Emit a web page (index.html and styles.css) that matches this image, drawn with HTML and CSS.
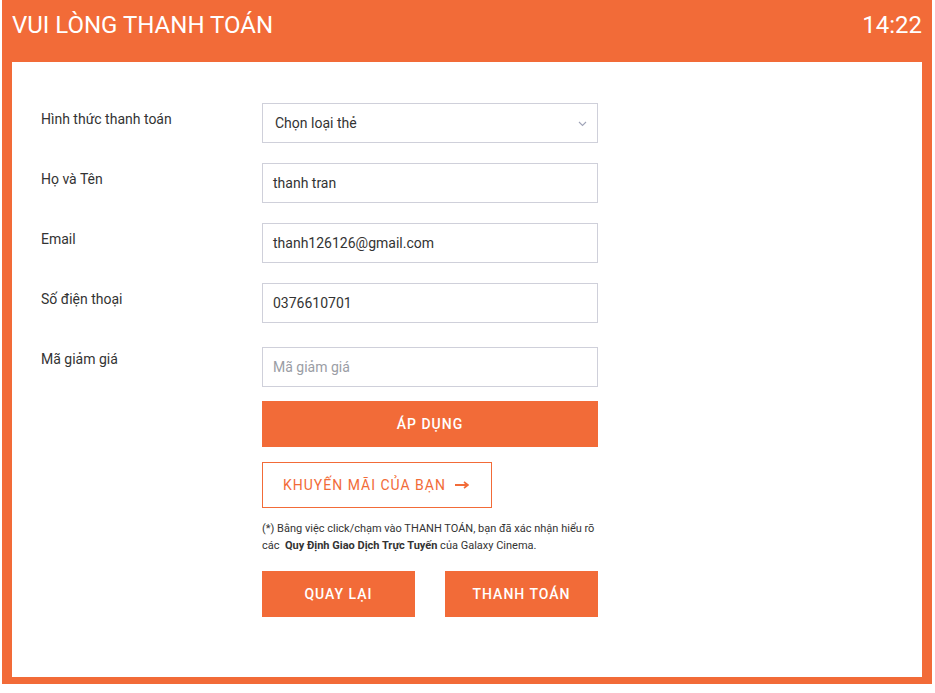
FILE: index.html
```html
<!DOCTYPE html>
<html lang="vi">
<head>
<meta charset="utf-8">
<title>Vui lòng thanh toán</title>
<link rel="stylesheet" href="styles.css">
</head>
<body>
<div class="frame">
  <header class="topbar">
    <h1 class="title">VUI LÒNG THANH TOÁN</h1>
    <div class="timer">14:22</div>
  </header>
  <main class="card">
    <div class="row">
      <label class="label">Hình thức thanh toán</label>
      <div class="field select">
        <span>Chọn loại thẻ</span>
        <svg class="chev" width="9" height="6" viewBox="0 0 9 6"><path d="M1 1l3.5 3.5L8 1" fill="none" stroke="#a0a4b8" stroke-width="1.1"/></svg>
      </div>
    </div>
    <div class="row">
      <label class="label">Họ và Tên</label>
      <div class="field">thanh tran</div>
    </div>
    <div class="row">
      <label class="label">Email</label>
      <div class="field">thanh126126@gmail.com</div>
    </div>
    <div class="row">
      <label class="label">Số điện thoại</label>
      <div class="field">0376610701</div>
    </div>
    <div class="row last">
      <label class="label">Mã giảm giá</label>
      <div class="col">
        <div class="field placeholder discount">Mã giảm giá</div>
        <button class="btn apply">ÁP DỤNG</button>
        <button class="btn-outline"><span>KHUYẾN MÃI CỦA BẠN</span>
          <svg class="arrow" width="14" height="8" viewBox="0 0 14 8"><path d="M0 4h12" stroke="#f26b38" stroke-width="2"/><path d="M9 1l4 3-4 3" fill="none" stroke="#f26b38" stroke-width="1.6"/></svg>
        </button>
        <p class="note">(*) Bằng việc click/chạm vào THANH TOÁN, bạn đã xác nhận hiểu rõ các &nbsp;<b>Quy Định Giao Dịch Trực Tuyến</b> của Galaxy Cinema.</p>
        <div class="actions">
          <button class="btn half">QUAY LẠI</button>
          <button class="btn half">THANH TOÁN</button>
        </div>
      </div>
    </div>
  </main>
</div>
</body>
</html>
```
FILE: styles.css
```css
* { box-sizing: border-box; }
body {
  margin: 0 3px 0 2px;
  background: #fff;
  font-family: Roboto, "Liberation Sans", Arial, sans-serif;
  color: #333;
}
.frame {
  background: #f26b38;
  padding: 0 10px 7px 10px;
}
.topbar {
  height: 62px;
  display: flex;
  justify-content: space-between;
  align-items: flex-start;
  padding-top: 10px;
  color: #fff;
}
.title {
  margin: 0;
  font-size: 24px;
  line-height: 30px;
  font-weight: 400;
}
.timer {
  font-size: 24px;
  line-height: 30px;
}
.card {
  background: #fff;
  height: 615px;
  padding: 41px 29px 0 29px;
}
.row {
  display: flex;
  align-items: flex-start;
  margin-bottom: 20px;
}
.label {
  width: 221px;
  flex: none;
  font-size: 14px;
  line-height: 20px;
  margin-top: 6px;
  color: #333;
}
.field {
  width: 336px;
  height: 40px;
  border: 1px solid #cfd0da;
  padding: 0 10px;
  display: flex;
  align-items: center;
  font-size: 14px;
  color: #333;
}
.select {
  justify-content: space-between;
  padding-left: 12px;
  padding-right: 10px;
}
.chev { margin-top: 1px; }
.placeholder { color: #9a9da5; }
.discount { margin-top: 4px; }
.col { width: 336px; display: flex; flex-direction: column; align-items: flex-start; }
.btn {
  border: 0;
  background: #f26b38;
  color: #fff;
  font-family: inherit;
  font-size: 14px;
  font-weight: 500;
  letter-spacing: 1px;
  height: 46px;
  padding: 0;
  cursor: pointer;
}
.apply { width: 336px; margin-top: 14px; }
.btn-outline {
  margin-top: 15px;
  width: 230px;
  height: 46px;
  border: 1px solid #f26b38;
  background: #fff;
  color: #f26b38;
  font-family: inherit;
  font-size: 14px;
  letter-spacing: 1px;
  display: flex;
  align-items: center;
  justify-content: flex-start;
  gap: 9px;
  padding: 0 0 0 20px;
}
.note {
  margin: 12px 0 0 0;
  font-size: 11px;
  line-height: 17px;
  color: #333;
  width: 345px;
}
.note b { font-weight: 700; }
.actions {
  margin-top: 17px;
  width: 336px;
  display: flex;
  justify-content: space-between;
}
.half { width: 153px; }
```
